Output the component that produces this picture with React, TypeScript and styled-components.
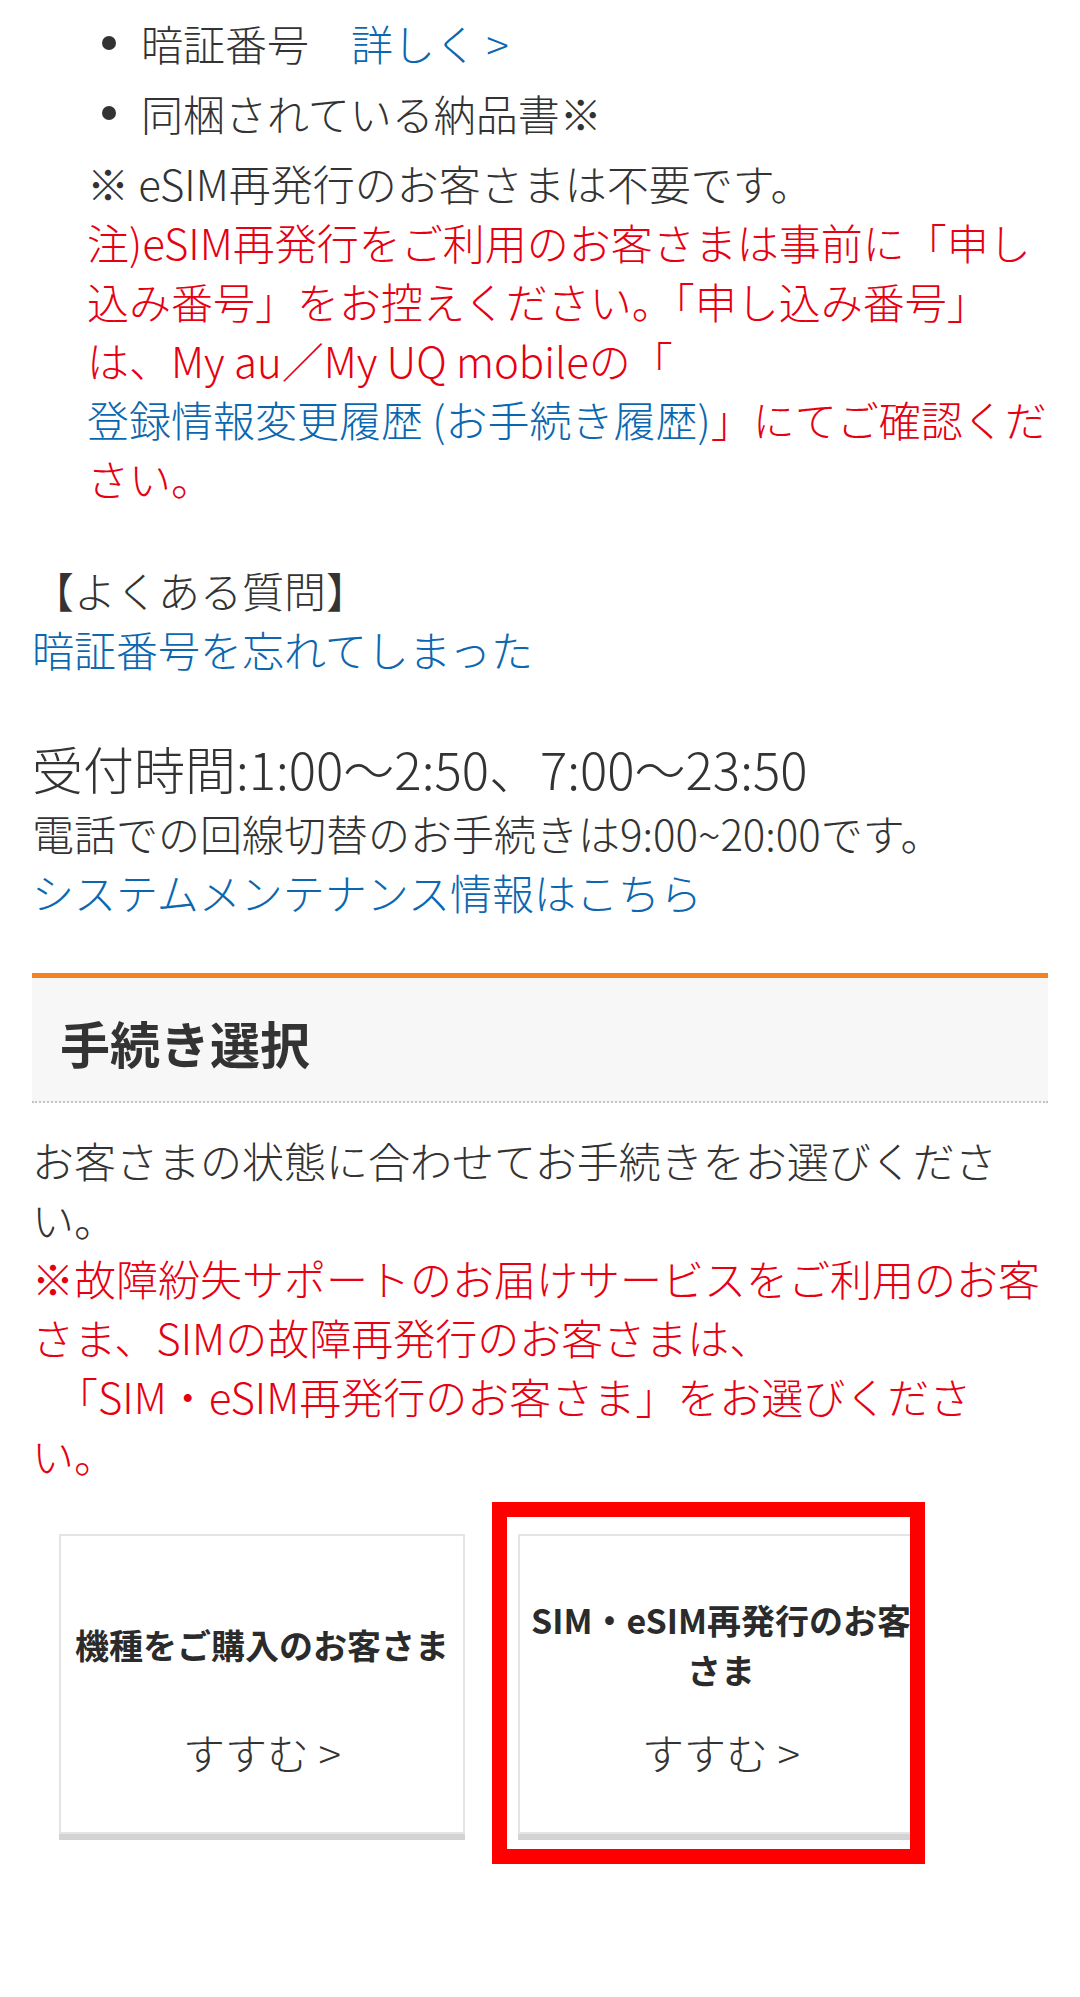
import React from "react";
import styled, { createGlobalStyle } from "styled-components";

const GlobalStyle = createGlobalStyle`
  html, body {
    margin: 0;
    padding: 0;
    background: #ffffff;
  }
  body {
    font-family: "Noto Sans CJK JP", "Noto Sans", sans-serif;
    font-size: 42px;
    font-weight: 300;
    line-height: 59px;
    color: #333333;
  }
  * { box-sizing: border-box; }
`;

const Page = styled.main`
  padding: 13px 32px 150px;
`;

const BulletList = styled.ul`
  list-style: none;
  margin: 0;
  padding: 0 0 0 70px;
`;

const BulletItem = styled.li`
  display: flex;
  align-items: center;
  margin: 0 0 11px;
  &::before {
    content: "";
    flex: none;
    width: 14px;
    height: 14px;
    border-radius: 50%;
    background: #333333;
    margin-right: 25px;
  }
`;

const TextLink = styled.a`
  color: #0a67b0;
  text-decoration: none;
`;

const Note = styled.div`
  margin: 0 -8px 0 55px;
`;

const Line = styled.p`
  margin: 0;
`;

const Red = styled.span`
  color: #e60012;
`;

const Block = styled.section<{ $gap: number }>`
  margin-top: ${(p) => p.$gap}px;
`;

const HoursTitle = styled.p`
  margin: 0;
  font-size: 51px;
  line-height: 69px;
`;

const SectionHeader = styled.h2`
  margin: 52px 0 0;
  padding: 29px 28px 24px;
  border-top: 5px solid #f58220;
  border-bottom: 2px dotted #c4c4c4;
  background: #f7f7f7;
  font-size: 50px;
  line-height: 70px;
  font-weight: 700;
  color: #333333;
`;

const Intro = styled.div`
  margin-top: 27px;
`;

const Indent = styled.span`
  display: inline-block;
  width: 24px;
`;

const Cards = styled.div`
  display: flex;
  align-items: flex-start;
  gap: 53px;
  margin-top: 50px;
  padding-left: 27px;
`;

const CardSlot = styled.div`
  position: relative;
  flex: none;
  width: 406px;
  border-bottom: 6px solid #d3d3d3;
`;

const Card = styled.a`
  display: flex;
  flex-direction: column;
  height: 300px;
  padding: 24px 6px 58px;
  border: 2px solid #e4e4e4;
  background: #ffffff;
  color: #333333;
  text-decoration: none;
`;

const CardTitle = styled.div`
  display: flex;
  align-items: center;
  justify-content: center;
  height: 170px;
  font-size: 34px;
  line-height: 50px;
  font-weight: 700;
  text-align: center;
  color: #2b2b2b;
`;

const CardAction = styled.div`
  font-size: 42px;
  line-height: 44px;
  text-align: center;
`;

const Highlight = styled.span`
  position: absolute;
  left: -26px;
  top: -32px;
  right: -1px;
  bottom: -30px;
  border: 15px solid #ff0000;
  pointer-events: none;
`;

export default function App() {
  return (
    <>
      <GlobalStyle />
      <Page>
        <BulletList>
          <BulletItem>
            <span>
              暗証番号　<TextLink href="#">詳しく &gt;</TextLink>
            </span>
          </BulletItem>
          <BulletItem>同梱されている納品書※</BulletItem>
        </BulletList>

        <Note>
          <Line>※ eSIM再発行のお客さまは不要です。</Line>
          <Line>
            <Red>
              注)eSIM再発行をご利用のお客さまは事前に「申し込み番号」をお控えください。「申し込み番号」は、My au／My UQ mobileの「
            </Red>
            <br />
            <TextLink href="#">登録情報変更履歴 (お手続き履歴)</TextLink>
            <Red>」にてご確認ください。</Red>
          </Line>
        </Note>

        <Block $gap={53}>
          <Line>【よくある質問】</Line>
          <Line>
            <TextLink href="#">暗証番号を忘れてしまった</TextLink>
          </Line>
        </Block>

        <Block $gap={56}>
          <HoursTitle>受付時間:1:00～2:50、7:00～23:50</HoursTitle>
          <Line>電話での回線切替のお手続きは9:00~20:00です。</Line>
          <Line>
            <TextLink href="#">システムメンテナンス情報はこちら</TextLink>
          </Line>
        </Block>

        <SectionHeader>手続き選択</SectionHeader>

        <Intro>
          <Line>お客さまの状態に合わせてお手続きをお選びください。</Line>
          <Line>
            <Red>
              ※故障紛失サポートのお届けサービスをご利用のお客さま、SIMの故障再発行のお客さまは、
              <br />
              <Indent />
              「SIM・eSIM再発行のお客さま」をお選びください。
            </Red>
          </Line>
        </Intro>

        <Cards>
          <CardSlot>
            <Card href="#">
              <CardTitle>機種をご購入のお客さま</CardTitle>
              <CardAction>すすむ &gt;</CardAction>
            </Card>
          </CardSlot>
          <CardSlot>
            <Card href="#">
              <CardTitle>SIM・eSIM再発行のお客さま</CardTitle>
              <CardAction>すすむ &gt;</CardAction>
            </Card>
            <Highlight />
          </CardSlot>
        </Cards>
      </Page>
    </>
  );
}
